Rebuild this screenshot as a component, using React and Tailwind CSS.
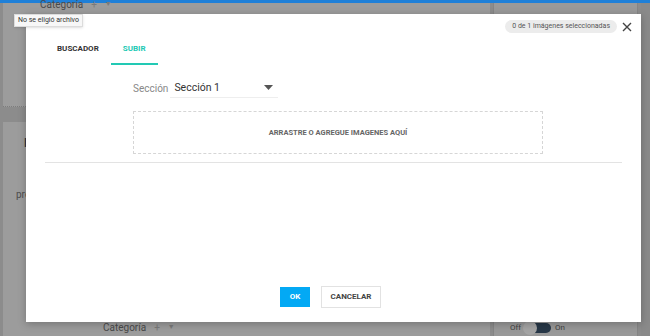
import { useState } from 'react';

const font = { fontFamily: 'Roboto, "Liberation Sans", sans-serif' };

function Background() {
  return (
    <div className="flex flex-col w-full h-full bg-[#8c8c8c]">
      <div className="h-[3px] bg-[#1f80d8]" />
      <div className="flex flex-1 gap-[3px] pl-[3px]">
        <div className="flex flex-col w-[487px] gap-[15px]">
          <div className="h-[104px] bg-[#9c9c9c] border-b border-dotted border-[#7d7d7d] px-[37px]">
            <div className="flex items-center gap-2 -mt-[6px] text-[10px] text-[#4a4a4a]">
              <span>Categoría</span>
              <span className="text-[#7a7a7a]">+</span>
              <span className="text-[7px] text-[#7a7a7a]">▼</span>
            </div>
          </div>
          <div className="flex-1 bg-[#9c9c9c] flex flex-col">
            <div className="pl-[21px] pt-[11px] text-[13px] font-bold text-[#263544]">N</div>
            <div className="pl-[13px] pt-[34px] text-[10px] text-[#4d4d4d]">pre</div>
            <div className="mt-auto pl-[100px] pb-[1px] flex items-center gap-2 text-[10px] text-[#4a4a4a]">
              <span>Categoría</span>
              <span className="text-[#7a7a7a]">+</span>
              <span className="text-[7px] text-[#7a7a7a]">▼</span>
            </div>
          </div>
        </div>
        <div className="w-[145px] bg-[#999999] border-x border-[#858585] flex flex-col">
          <div className="mt-auto flex items-center gap-[4px] pl-[16px] pb-[2px] text-[8px] text-[#3f3f3f]">
            <span>Off</span>
            <span className="relative w-[26px] h-[10px] rounded-full bg-[#273747]">
              <span className="absolute -left-[2px] -top-[2px] w-[14px] h-[14px] rounded-full bg-[#a5a5a5]" />
            </span>
            <span>On</span>
          </div>
        </div>
        <div className="flex-1 bg-[#8a8a8a]" />
      </div>
    </div>
  );
}

function Modal() {
  const [tab, setTab] = useState('subir');
  return (
    <div className="absolute left-[26px] top-[14px] w-[615px] h-[308px] bg-white flex flex-col shadow-[0_2px_8px_rgba(0,0,0,0.25)]">
      <div className="flex items-start justify-between">
        <div className="flex ml-[19px] mt-[21px]">
          <button
            onClick={() => setTab('buscador')}
            className={`h-[30px] px-3 text-[8px] font-bold border-b-2 ${tab === 'buscador' ? 'text-[#22c9b4] border-[#22c9b4]' : 'text-[#333] border-transparent'}`}
          >
            BUSCADOR
          </button>
          <button
            onClick={() => setTab('subir')}
            className={`h-[30px] px-3 text-[8px] font-bold border-b-2 ${tab === 'subir' ? 'text-[#22c9b4] border-[#22c9b4]' : 'text-[#333] border-transparent'}`}
          >
            SUBIR
          </button>
        </div>
        <div className="flex items-center gap-[5px] mt-[6px] mr-[9px]">
          <span className="h-[13px] px-[7px] rounded-full bg-[#ececec] text-[7px] text-[#555] flex items-center">
            0 de 1 imágenes seleccionadas
          </span>
          <svg width="10" height="10" viewBox="0 0 10 10" className="text-[#444]">
            <path d="M1 1L9 9M9 1L1 9" stroke="currentColor" strokeWidth="1.4" />
          </svg>
        </div>
      </div>

      <div className="flex items-center ml-[107px] mt-[13px] h-[20px]">
        <span className="text-[10px] text-[#888]">Sección</span>
        <div className="ml-[2px] w-[108px] h-[20px] flex items-center justify-between pl-[4px] pr-[5px] border-b border-[#eeeeee]">
          <span className="text-[10.5px] text-[#333]">Sección 1</span>
          <svg width="9" height="5" viewBox="0 0 9 5">
            <path d="M0 0H9L4.5 5Z" fill="#555" />
          </svg>
        </div>
      </div>

      <div className="ml-[107px] mt-[13px] w-[410px] h-[43px] border border-dashed border-[#d6d6d6] flex items-center justify-center">
        <span className="text-[7.5px] font-bold text-[#666]">ARRASTRE O AGREGUE IMAGENES AQUÍ</span>
      </div>

      <div className="ml-[19px] mt-[8px] w-[577px] h-px bg-[#e3e3e3]" />

      <div className="mt-auto mb-[14px] flex items-center justify-center gap-[11px] pr-[6px]">
        <button className="w-[30px] h-[20px] bg-[#03a9f4] text-white text-[8px] font-bold">OK</button>
        <button className="w-[60px] h-[22px] bg-white border border-[#e2e2e2] text-[#444] text-[8px] font-bold">CANCELAR</button>
      </div>
    </div>
  );
}

export default function App() {
  return (
    <div className="relative w-[650px] h-[336px] overflow-hidden" style={font}>
      <Background />
      <Modal />
      <div className="absolute left-[14px] top-[14px] h-[13px] px-[3px] flex items-center bg-[#f7f7f7] border border-[#dcdcdc] shadow-sm text-[7px] text-[#333]">
        No se eligió archivo
      </div>
    </div>
  );
}
